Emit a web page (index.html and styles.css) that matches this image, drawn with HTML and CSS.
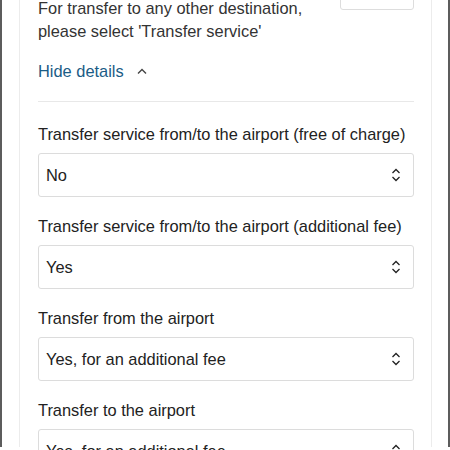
FILE: index.html
```html
<!DOCTYPE html>
<html lang="en">
<head>
    <meta charset="UTF-8">
    <meta name="viewport" content="width=device-width, initial-scale=1.0">
    <title>Transfer</title>
    <link rel="stylesheet" href="styles.css">
</head>
<body>
    <div class="frame">
        <div class="card">
            <div class="intro">
                <p class="note">For transfer to any other destination, please select 'Transfer service'</p>
                <div class="qty"></div>
            </div>
            <a class="toggle" href="#">Hide details
                <svg width="12" height="8" viewBox="0 0 12 8"><path d="M2 6.5 L6 2.5 L10 6.5" fill="none" stroke="#444" stroke-width="1.4"/></svg>
            </a>
            <hr class="divider">

            <div class="field">
                <label>Transfer service from/to the airport (free of charge)</label>
                <div class="select"><span>No</span><svg class="updown" width="12" height="16" viewBox="0 0 12 16"><path d="M2.5 6 L6 2.5 L9.5 6 M2.5 10 L6 13.5 L9.5 10" fill="none" stroke="#222" stroke-width="1.3"/></svg></div>
            </div>
            <div class="field">
                <label>Transfer service from/to the airport (additional fee)</label>
                <div class="select"><span>Yes</span><svg class="updown" width="12" height="16" viewBox="0 0 12 16"><path d="M2.5 6 L6 2.5 L9.5 6 M2.5 10 L6 13.5 L9.5 10" fill="none" stroke="#222" stroke-width="1.3"/></svg></div>
            </div>
            <div class="field">
                <label>Transfer from the airport</label>
                <div class="select"><span>Yes, for an additional fee</span><svg class="updown" width="12" height="16" viewBox="0 0 12 16"><path d="M2.5 6 L6 2.5 L9.5 6 M2.5 10 L6 13.5 L9.5 10" fill="none" stroke="#222" stroke-width="1.3"/></svg></div>
            </div>
            <div class="field">
                <label>Transfer to the airport</label>
                <div class="select"><span>Yes, for an additional fee</span><svg class="updown" width="12" height="16" viewBox="0 0 12 16"><path d="M2.5 6 L6 2.5 L9.5 6 M2.5 10 L6 13.5 L9.5 10" fill="none" stroke="#222" stroke-width="1.3"/></svg></div>
            </div>
        </div>
    </div>
</body>
</html>
```

FILE: styles.css
```css
html, body {
    margin: 0;
    height: 100%;
    overflow: hidden;
    background: #fff;
}
body {
    font-family: "Liberation Sans", Arial, sans-serif;
    font-size: 16.4px;
    color: #222;
}
.frame {
    height: 450px;
    border-left: 2px solid #5c5c5c;
    border-right: 2px solid #5c5c5c;
    padding: 0 16px 0 17px;
    box-sizing: border-box;
}
.card {
    height: 100%;
    border-left: 1px solid #ececec;
    border-right: 1px solid #ececec;
    padding: 0 17px 0 18px;
}
.intro {
    display: flex;
    justify-content: space-between;
    align-items: flex-start;
    margin-top: -3px;
}
.note {
    margin: 0;
    width: 295px;
    line-height: 23px;
    color: #333;
}
.qty {
    width: 72px;
    height: 40px;
    margin-top: -29px;
    border: 1px solid #ddd;
    border-radius: 3px;
}
.toggle {
    display: flex;
    align-items: center;
    gap: 12px;
    margin-top: 17px;
    line-height: 22px;
    color: #1b5c86;
    text-decoration: none;
}
.divider {
    margin: 19px 0 0;
    border: 0;
    border-top: 1px solid #e8e8e8;
}
.field {
    margin-top: 21px;
}
.field label {
    display: block;
    line-height: 22px;
    margin-bottom: 8px;
}
.field + .field {
    margin-top: 18px;
}
.select {
    display: flex;
    justify-content: space-between;
    align-items: center;
    height: 44px;
    box-sizing: border-box;
    padding: 0 11px 0 7px;
    border: 1px solid #dcdcdc;
    border-radius: 3px;
}
```
